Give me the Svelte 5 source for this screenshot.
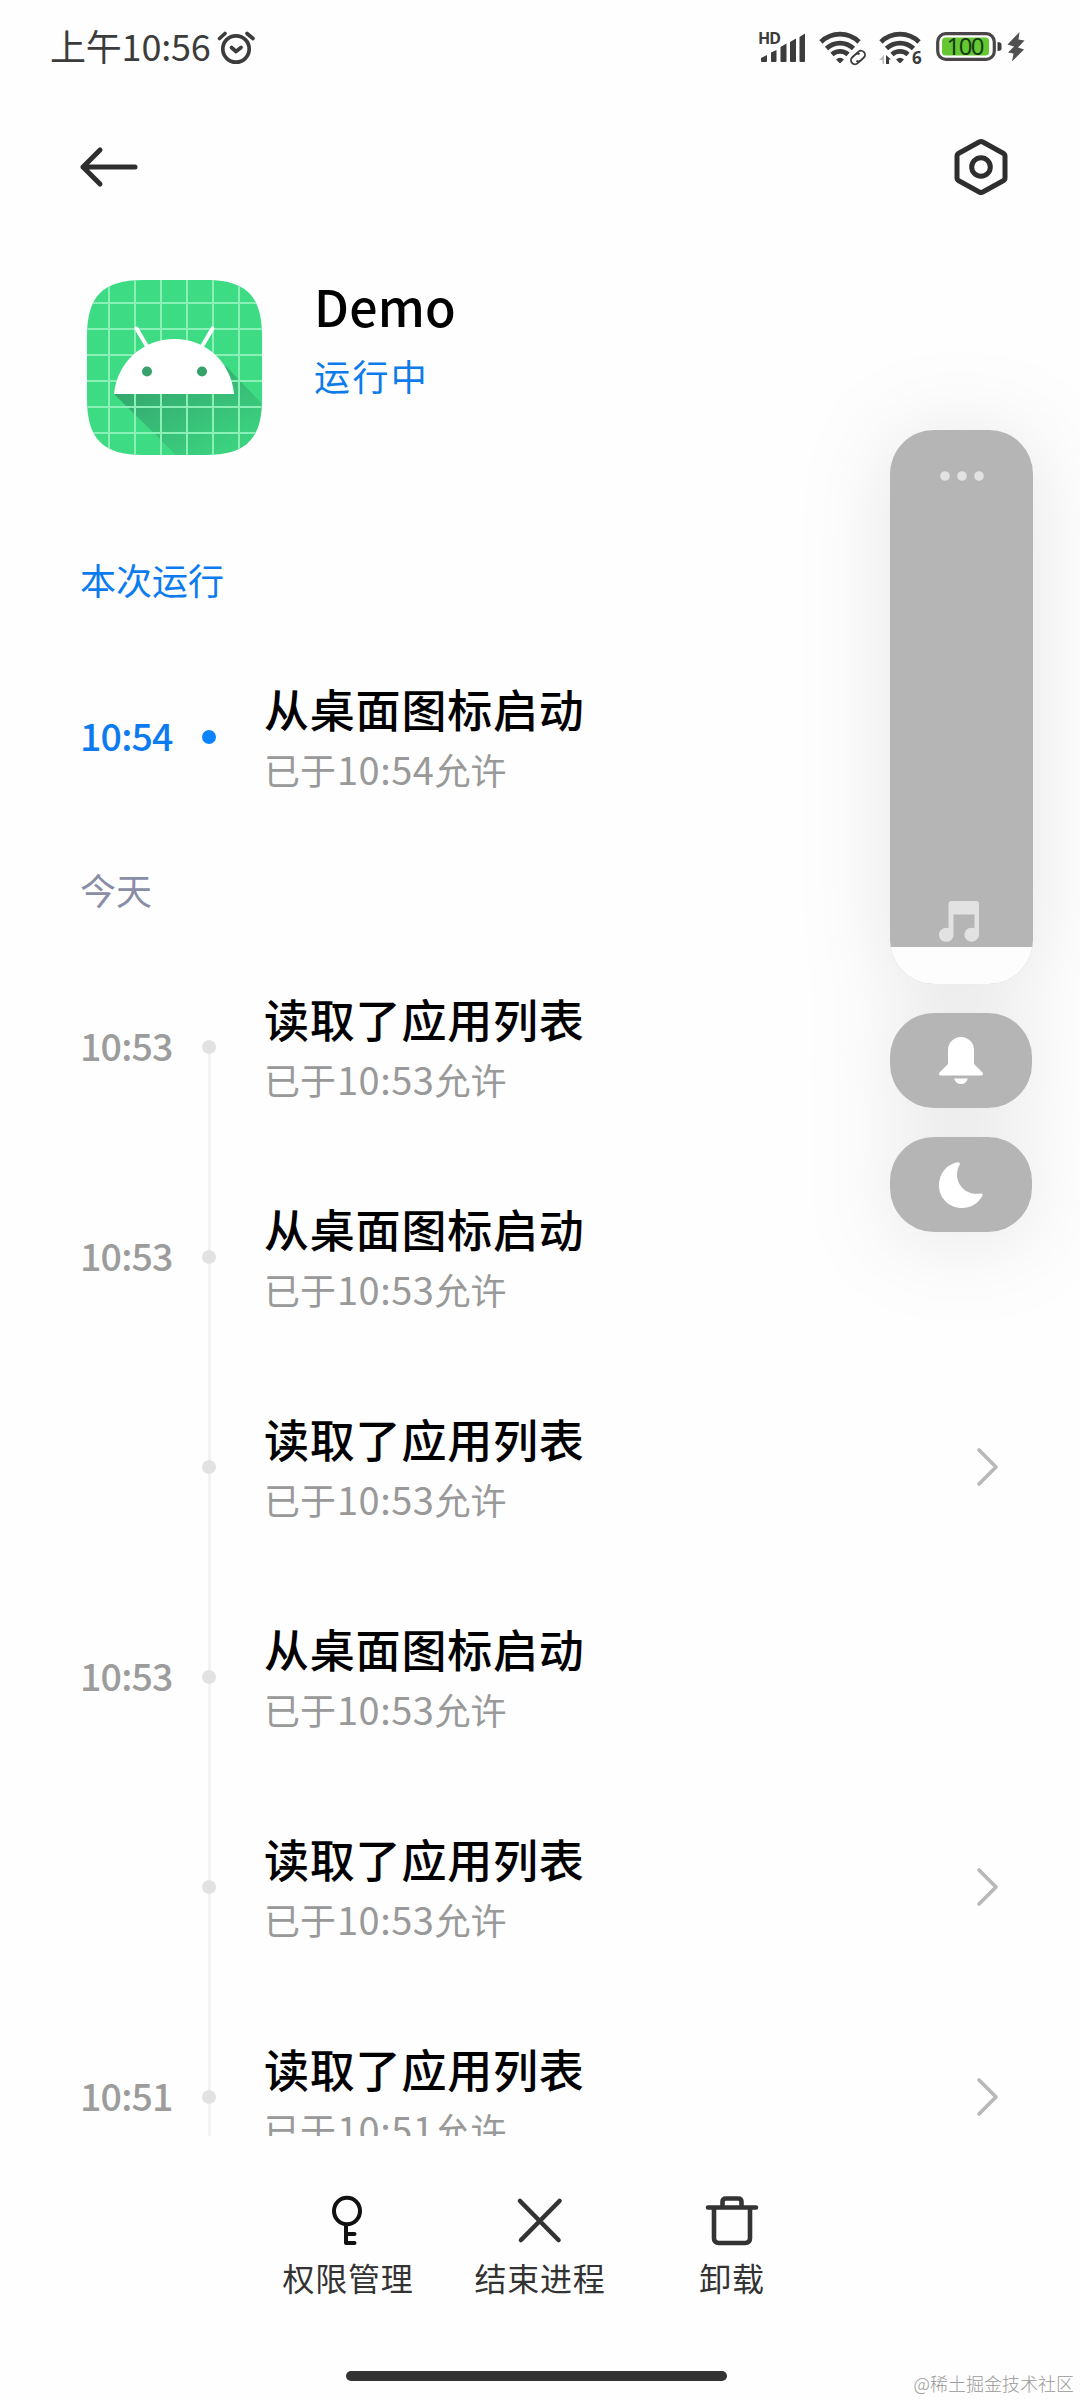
<script>
    const sections = [
        {
            label: '本次运行',
            active: true,
            rows: [{ time: '10:54', title: '从桌面图标启动', allowed: '10:54' }],
        },
        {
            label: '今天',
            active: false,
            rows: [
                { time: '10:53', title: '读取了应用列表', allowed: '10:53' },
                { time: '10:53', title: '从桌面图标启动', allowed: '10:53' },
                { time: '', title: '读取了应用列表', allowed: '10:53', more: true },
                { time: '10:53', title: '从桌面图标启动', allowed: '10:53' },
                { time: '', title: '读取了应用列表', allowed: '10:53', more: true },
                { time: '10:51', title: '读取了应用列表', allowed: '10:51', more: true },
            ],
        },
    ];

    const gridLines = [22, 48, 74, 100, 126, 152];
</script>

{#snippet wifi()}
    <path d="M3 13 A 27 27 0 0 1 41 13" />
    <path d="M8.5 19.5 A 19.5 19.5 0 0 1 35.5 19.5" />
    <path d="M14 25.5 A 12 12 0 0 1 30 25.5" />
    <path class="solid" d="M18 30.5 Q22 27 26 30.5 L22.8 33.8 Q22 34.5 21.2 33.8 Z" />
{/snippet}

<main>
    <div class="status">
        <span class="clock">上午10:56</span>
        <svg class="alarm" width="40" height="36" viewBox="0 0 40 36">
            <circle cx="20" cy="20" r="13.2" />
            <path d="M3.5 9.5 L9 4.5 M31 4.5 L37 9.5" />
            <path d="M15.5 18.5 L20 22.5 L25 18.5" />
        </svg>
        <svg class="signal" width="48" height="34" viewBox="0 0 48 34">
            <text x="0" y="13.5" textLength="23">HD</text>
            <path d="M3 31 V28 L9 25 V31 Q9 32 8 32 H4 Q3 32 3 31Z" />
            <path d="M13 31 V22.5 L18.5 20 V31 Q18.5 32 17.5 32 H14 Q13 32 13 31Z" />
            <path d="M22.5 31 V17 L28.5 13.5 V31 Q28.5 32 27.5 32 H23.5 Q22.5 32 22.5 31Z" />
            <path d="M32 31 V12 L38 8.5 V31 Q38 32 37 32 H33 Q32 32 32 31Z" />
            <path d="M41.5 31 V7 L47 3.5 V31 Q47 32 46 32 H42.5 Q41.5 32 41.5 31Z" />
        </svg>
        <svg class="wifi" width="48" height="36" viewBox="0 0 48 36">
            {@render wifi()}
            <g class="link" transform="rotate(-42 40 28.5)">
                <path d="M39 32.5 H36 A4 4 0 0 1 36 24.5 H40 A4 4 0 0 1 43.5 27" />
                <path d="M41 24.5 H44 A4 4 0 0 1 44 32.5 H40 A4 4 0 0 1 36.5 30" />
            </g>
        </svg>
        <svg class="wifi six" width="48" height="36" viewBox="0 0 48 36">
            {@render wifi()}
            <path class="solid faint" d="M1 31 L6 26 V35 H4.5 V31Z" />
            <path class="solid" d="M8 35 V26 L13 30.5 H11 V35Z" />
            <text x="34" y="35">6</text>
        </svg>
        <svg class="battery" width="67" height="30" viewBox="0 0 67 30">
            <rect class="shell" x="1.7" y="1.7" width="56.6" height="25.6" rx="8" />
            <rect class="charge" x="6" y="5.5" width="47" height="18" rx="3.5" />
            <path d="M61.5 10 Q65.5 10 65.5 12.5 V16.5 Q65.5 19 61.5 19Z" />
            <text x="10.5" y="23" textLength="38">100</text>
        </svg>
        <svg class="bolt" width="18" height="30" viewBox="0 0 18 30">
            <path d="M12.500 0 L0.500 12.500 L7 14.500 L1 20.500 L6.500 21.500 L5 29.500 L17 17.500 L11 15.500 L17.500 8.500 L11.500 7.500Z" />
        </svg>
    </div>

    <header>
        <svg class="back" width="60" height="44" viewBox="0 0 60 44">
            <path d="M21 5 L4 22 L21 39 M4 22 H56" />
        </svg>
        <svg class="settings" width="56" height="60" viewBox="0 0 56 60">
            <path d="M26.2 5 Q28 4 29.8 5 L50.2 16.2 Q52 17.2 52 19.2 V40.8 Q52 42.8 50.2 43.8 L29.8 55 Q28 56 26.2 55 L5.8 43.8 Q4 42.8 4 40.8 V19.2 Q4 17.2 5.8 16.2Z" />
            <circle cx="28" cy="30" r="9.3" />
        </svg>
    </header>

    <section class="app">
        <svg class="logo" width="175" height="175" viewBox="0 0 175 175">
            <defs>
                <clipPath id="tile">
                    <path d="M0 56 C0 16 16 0 56 0 H119 C159 0 175 16 175 56 V119 C175 159 159 175 119 175 H56 C16 175 0 159 0 119Z" />
                </clipPath>
                <linearGradient id="shade" x1="0.1" y1="0.1" x2="0.8" y2="0.9">
                    <stop offset="0" stop-color="#2f8a61" stop-opacity="0.7" />
                    <stop offset="1" stop-color="#2f8a61" stop-opacity="0.12" />
                </linearGradient>
            </defs>
            <g clip-path="url(#tile)">
                <rect width="175" height="175" fill="#3ddc84" />
                <path d="M27 114 L89 175 H175 V124 L139 86Z" fill="url(#shade)" />
                {#each gridLines as p}
                    <path class="grid" d="M{p} 0 V175 M0 {p + 1} H175" />
                {/each}
            </g>
            <path d="M27 114 C30 82 56 59 87.5 59 C119 59 144 82 147 114Z" fill="#fff" />
            <path class="antenna" d="M49.5 48.5 L61 68 M125.500 48.5 L114 68" />
            <circle cx="60" cy="91.5" r="5" fill="#36a169" />
            <circle cx="115" cy="91.5" r="5" fill="#36a169" />
        </svg>
        <div class="info">
            <h1>Demo</h1>
            <p>运行中</p>
        </div>
    </section>

    <div class="history">
        {#each sections as section}
            <h2 class:active={section.active}>{section.label}</h2>
            {#each section.rows as row, i}
                <div class="row" class:active={section.active}>
                    <span class="time">{row.time}</span>
                    <div class="rail">
                        <i class:hidden={i === 0 || section.active}></i>
                        <b></b>
                        <i class:hidden={section.active}></i>
                    </div>
                    <div class="text">
                        <h3>{row.title}</h3>
                        <p>已于<span class="digits">{row.allowed}</span>允许</p>
                    </div>
                    {#if row.more}
                        <svg class="chevron" width="24" height="42" viewBox="0 0 24 42">
                            <path d="M3 4 L20 21 L3 38" />
                        </svg>
                    {/if}
                </div>
            {/each}
        {/each}
    </div>

    <footer>
        <nav>
            <div class="action">
                <svg class="key" width="56" height="56" viewBox="0 0 56 56">
                    <ellipse cx="27" cy="19" rx="13" ry="13.3" />
                    <path d="M26 33 V51 H34.5 M26 42 H34.5" />
                </svg>
                <span>权限管理</span>
            </div>
            <div class="action">
                <svg width="56" height="56" viewBox="0 0 56 56">
                    <path d="M8 9 L46.5 48 M47.5 9 L9 48" />
                </svg>
                <span>结束进程</span>
            </div>
            <div class="action">
                <svg width="56" height="56" viewBox="0 0 56 56">
                    <path d="M4 15.5 H52 M10 15.5 V46 Q10 51 15 51 H41 Q46 51 46 46 V15.5 M18.5 15 V10 Q18.5 6.5 22 6.5 H34 Q37.5 6.5 37.5 10 V15" />
                </svg>
                <span>卸载</span>
            </div>
        </nav>
        <div class="home"></div>
        <span class="watermark">@稀土掘金技术社区</span>
    </footer>

    <aside>
        <div class="volume">
            <svg class="dots" width="44" height="12" viewBox="0 0 44 12">
                <circle cx="5" cy="6" r="4.8" />
                <circle cx="22" cy="6" r="4.8" />
                <circle cx="39" cy="6" r="4.8" />
            </svg>
            <svg class="music" width="42" height="42" viewBox="0 0 42 42">
                <path d="M13.5 0 H38 Q41 0 41 3 V34 A7.3 7 0 1 1 36.5 27.2 V13.5 H15.5 V34 A7.3 7 0 1 1 10.5 27.2 V3 Q10.5 0 13.5 0Z" />
            </svg>
            <div class="level"></div>
        </div>
        <div class="pill">
            <svg width="46" height="48" viewBox="0 0 46 48">
                <path d="M10 13 A13 13 0 0 1 36 13 V27 L44.500 35.5 Q46 38.5 43 38.5 H3 Q0 38.5 1.500 35.5 L10 27Z" />
                <path d="M16 41.5 H30 Q28 47 23 47 Q18 47 16 41.5Z" />
            </svg>
        </div>
        <div class="pill">
            <svg width="46" height="48" viewBox="0 0 46 48">
                <path d="M18.5 1.5 Q23 0.5 21.5 4 C13.5 19 26 35.5 42 32.5 Q46 32 44 35.5 C39 43.5 32 47 24 47 C11 47 1 37 1 24.5 C1 13 8 4 18.5 1.5Z" />
            </svg>
        </div>
    </aside>
</main>

<style>
    :global(body) {
        background: #fefefe;
    }

    main {
        position: relative;
        width: 1080px;
        height: 2400px;
        overflow: hidden;
        background: #fefefe;
        font-family: "Noto Sans CJK SC", "Noto Sans", sans-serif;
        color: #000;
    }

    h1, h2, h3, p {
        margin: 0;
        font-weight: 400;
    }

    svg {
        display: block;
        flex: none;
        overflow: visible;
        fill: none;
        stroke-linecap: round;
        stroke-linejoin: round;
    }

    /* status bar */
    .status {
        display: flex;
        align-items: center;
        height: 94px;
        padding-left: 50px;
        color: #3c3c3c;
    }
    .clock {
        width: 166px;
        font-size: 36px;
        line-height: 90px;
        letter-spacing: -0.2px;
        padding-bottom: 4px;
        white-space: nowrap;
    }
    .status text {
        stroke: none;
        fill: #3c3c3c;
        font-family: "Noto Sans", sans-serif;
    }
    .alarm {
        stroke: #3c3c3c;
        stroke-width: 3.7;
    }
    .signal {
        margin-left: 502px;
        fill: #3c3c3c;
    }
    .signal text {
        font-size: 16px;
        font-weight: 700;
    }
    .wifi {
        margin-left: 12px;
        stroke: #3c3c3c;
        stroke-width: 4.8;
        stroke-linecap: butt;
    }
    .wifi .solid {
        fill: #3c3c3c;
        stroke: none;
    }
    .wifi .faint {
        fill: #bbb;
    }
    .wifi.six text {
        font-size: 17px;
        font-weight: 700;
    }
    .wifi .link {
        stroke-width: 1.9;
    }
    .battery {
        margin-left: 10px;
        fill: #3c3c3c;
    }
    .battery .shell {
        fill: none;
        stroke: #4a4648;
        stroke-width: 3.2;
    }
    .battery .charge {
        fill: #65c832;
    }
    .battery text {
        font-size: 24px;
        fill: #163d12;
    }
    .bolt {
        margin-left: 4px;
        fill: #505050;
    }

    header {
        display: flex;
        justify-content: space-between;
        align-items: center;
        height: 146px;
        padding: 0 71px 0 79px;
    }
    header svg {
        stroke: #2e2e2e;
        stroke-width: 5;
    }

    /* app card */
    .app {
        display: flex;
        height: 252px;
        padding: 40px 87px 0;
    }
    .info {
        margin-left: 52px;
    }
    .grid {
        stroke: #8bf0b5;
        stroke-width: 2;
    }
    .antenna {
        stroke: #fff;
        stroke-width: 4;
    }
    .app h1 {
        font-size: 50px;
        font-weight: 500;
        line-height: 50px;
        letter-spacing: 0.2px;
    }
    .app p {
        margin-top: 20px;
        font-size: 36px;
        line-height: 50px;
        letter-spacing: 2.4px;
        color: #0d7bea;
    }

    /* timeline */
    .history {
        height: 1604px;
        overflow: hidden;
    }
    h2 {
        height: 94px;
        padding: 0 0 6px 80px;
        font-size: 36px;
        line-height: 94px;
        color: #8a8da6;
    }
    h2.active, .row.active .time {
        color: #0d7bf0;
    }
    .row {
        display: flex;
        align-items: center;
        height: 210px;
        padding: 0 80px;
    }
    .time {
        width: 115px;
        padding-bottom: 5px;
        font-size: 37.5px;
        font-weight: 500;
        line-height: 60px;
        letter-spacing: -0.8px;
        color: #9c9c9c;
    }
    .rail {
        display: flex;
        flex-direction: column;
        align-items: center;
        align-self: stretch;
        width: 28px;
    }
    .rail i {
        flex: 1;
        width: 3px;
        background: #f3f3f3;
    }
    .rail i.hidden {
        visibility: hidden;
    }
    .rail b {
        width: 14px;
        height: 14px;
        border-radius: 50%;
        background: #e2e2e2;
    }
    .row.active b {
        background: #0d84ff;
    }
    .text {
        flex: 1;
        margin-left: 41px;
        padding-top: 3px;
    }
    h3 {
        font-size: 45px;
        font-weight: 500;
        line-height: 60px;
        letter-spacing: 0.8px;
    }
    .text p {
        font-size: 36px;
        line-height: 60px;
        color: #999;
    }
    .digits {
        margin-left: 1px;
        font-size: 38px;
        line-height: 1;
        letter-spacing: 0.5px;
    }
    .chevron {
        stroke: #b8b8b8;
        stroke-width: 3.6;
    }

    /* bottom actions */
    nav {
        display: flex;
        justify-content: center;
        height: 235px;
    }
    .action {
        display: flex;
        flex-direction: column;
        align-items: center;
        width: 192px;
        padding-top: 56px;
        font-size: 32px;
        line-height: 46px;
        letter-spacing: 0.8px;
        color: #333;
    }
    .action svg {
        stroke: #333;
        stroke-width: 4.6;
    }
    .action .key {
        stroke: #111;
        stroke-width: 4;
    }
    .action span {
        margin-top: 6px;
    }
    .home {
        width: 381px;
        height: 10px;
        margin-left: 346px;
        border-radius: 5px;
        background: #333;
    }
    .watermark {
        position: absolute;
        right: 6px;
        bottom: 3px;
        font-size: 18px;
        font-weight: 300;
        line-height: 27px;
        color: #999;
    }

    /* floating volume panel */
    aside {
        position: absolute;
        top: 430px;
        left: 890px;
        width: 143px;
        display: flex;
        flex-direction: column;
        gap: 29px;
        filter: drop-shadow(0 6px 45px rgba(0, 0, 0, 0.1));
    }
    .volume {
        display: flex;
        flex-direction: column;
        align-items: center;
        height: 554px;
        border-radius: 44px;
        overflow: hidden;
        background: #b5b5b5;
    }
    .dots {
        margin-top: 40px;
        fill: #e2e2e2;
    }
    .music {
        margin-top: auto;
        margin-right: 5px;
        margin-bottom: 4px;
        fill: #e2e2e2;
    }
    .level {
        width: 100%;
        height: 37px;
        background: #fdfdfd;
    }
    .pill {
        display: flex;
        align-items: center;
        justify-content: center;
        width: 142px;
        height: 95px;
        border-radius: 44px;
        background: #b5b5b5;
    }
    .pill svg {
        margin-right: 1px;
        fill: #fff;
    }
</style>
